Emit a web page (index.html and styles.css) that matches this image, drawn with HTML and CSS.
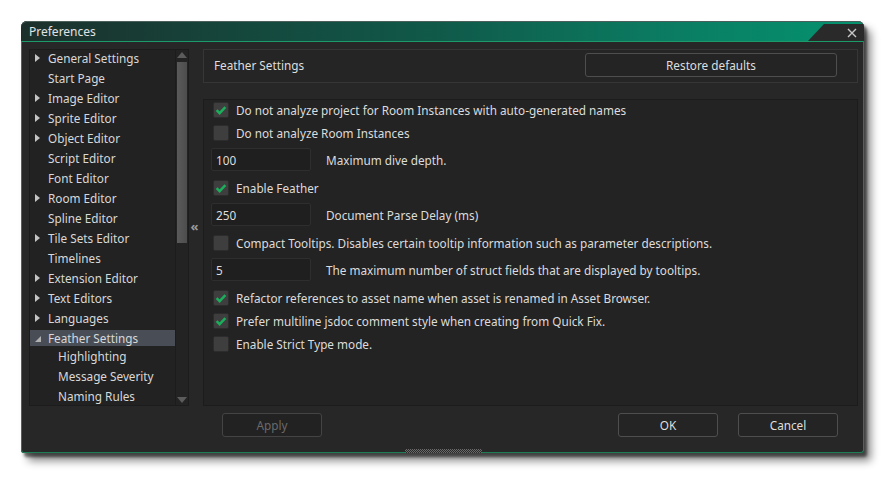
FILE: index.html
```html
<!DOCTYPE html>
<html>
<head>
<meta charset="utf-8">
<link rel="stylesheet" href="styles.css">
</head>
<body>
<div class="dialog">
  <div class="titlebar">
    <span class="title">Preferences</span>
    <div class="close-tab">
      <svg class="close-x" width="10" height="10" viewBox="0 0 10 10"><path d="M1 1 L9 9 M9 1 L1 9" stroke="#c8c8c8" stroke-width="1.4" fill="none"/></svg>
    </div>
  </div>
  <div class="body">
    <div class="main">
      <div class="tree-box">
        <ul class="tree">
          <li class="node"><span class="slot"><span class="arrow"></span></span>General Settings</li>
          <li class="node"><span class="slot"></span>Start Page</li>
          <li class="node"><span class="slot"><span class="arrow"></span></span>Image Editor</li>
          <li class="node"><span class="slot"><span class="arrow"></span></span>Sprite Editor</li>
          <li class="node"><span class="slot"><span class="arrow"></span></span>Object Editor</li>
          <li class="node"><span class="slot"></span>Script Editor</li>
          <li class="node"><span class="slot"></span>Font Editor</li>
          <li class="node"><span class="slot"><span class="arrow"></span></span>Room Editor</li>
          <li class="node"><span class="slot"></span>Spline Editor</li>
          <li class="node"><span class="slot"><span class="arrow"></span></span>Tile Sets Editor</li>
          <li class="node"><span class="slot"></span>Timelines</li>
          <li class="node"><span class="slot"><span class="arrow"></span></span>Extension Editor</li>
          <li class="node"><span class="slot"><span class="arrow"></span></span>Text Editors</li>
          <li class="node"><span class="slot"><span class="arrow"></span></span>Languages</li>
          <li class="node node-open"><span class="sel"><span class="slot"><span class="arrow-open"></span></span>Feather Settings</span></li>
          <li class="node child">Highlighting</li>
          <li class="node child">Message Severity</li>
          <li class="node child">Naming Rules</li>
        </ul>
        <div class="scrollbar">
          <span class="sb-up"></span>
          <span class="sb-thumb"></span>
          <span class="sb-space"></span>
          <span class="sb-down"></span>
        </div>
      </div>
      <div class="splitter">«</div>
      <div class="right">
        <div class="header-box">
          <span class="header-title">Feather Settings</span>
          <button class="btn restore">Restore defaults</button>
        </div>
        <div class="content-box">
          <div class="cb-row"><span class="cb checked"><svg width="16" height="16" viewBox="0 0 16 16"><path d="M3.6 8.2 L6.6 11.2 L12.4 5.2" stroke="#1cae5c" stroke-width="2.4" fill="none"/></svg></span><span class="lbl">Do not analyze project for Room Instances with auto-generated names</span></div>
          <div class="cb-row"><span class="cb"></span><span class="lbl">Do not analyze Room Instances</span></div>
          <div class="in-row"><span class="input">100</span><span class="in-lbl">Maximum dive depth.</span></div>
          <div class="cb-row"><span class="cb checked"><svg width="16" height="16" viewBox="0 0 16 16"><path d="M3.6 8.2 L6.6 11.2 L12.4 5.2" stroke="#1cae5c" stroke-width="2.4" fill="none"/></svg></span><span class="lbl">Enable Feather</span></div>
          <div class="in-row"><span class="input">250</span><span class="in-lbl">Document Parse Delay (ms)</span></div>
          <div class="cb-row"><span class="cb"></span><span class="lbl">Compact Tooltips. Disables certain tooltip information such as parameter descriptions.</span></div>
          <div class="in-row"><span class="input">5</span><span class="in-lbl">The maximum number of struct fields that are displayed by tooltips.</span></div>
          <div class="cb-row"><span class="cb checked"><svg width="16" height="16" viewBox="0 0 16 16"><path d="M3.6 8.2 L6.6 11.2 L12.4 5.2" stroke="#1cae5c" stroke-width="2.4" fill="none"/></svg></span><span class="lbl">Refactor references to asset name when asset is renamed in Asset Browser.</span></div>
          <div class="cb-row"><span class="cb checked"><svg width="16" height="16" viewBox="0 0 16 16"><path d="M3.6 8.2 L6.6 11.2 L12.4 5.2" stroke="#1cae5c" stroke-width="2.4" fill="none"/></svg></span><span class="lbl">Prefer multiline jsdoc comment style when creating from Quick Fix.</span></div>
          <div class="cb-row"><span class="cb"></span><span class="lbl">Enable Strict Type mode.</span></div>
        </div>
      </div>
    </div>
    <div class="buttons">
      <button class="btn btn-fixed disabled apply">Apply</button>
      <span class="spacer"></span>
      <button class="btn btn-fixed">OK</button>
      <button class="btn btn-fixed">Cancel</button>
    </div>
    <div class="grip"></div>
  </div>
</div>
</body>
</html>
```

FILE: styles.css
```css
html, body {
  margin: 0;
  padding: 0;
  background: #ffffff;
}
body {
  font-family: "Noto Sans", "Open Sans", sans-serif;
  font-size: 11.75px;
  color: #dcdcdc;
  padding: 21px 0 30px 21px;
}
.dialog {
  width: 843px;
  height: 432px;
  display: flex;
  flex-direction: column;
  border-radius: 6px 6px 3px 3px;
  box-shadow: 3px 4px 3px rgba(0, 0, 0, 0.55), 7px 8px 9px rgba(0, 0, 0, 0.45);
  background: #272727;
}
.titlebar {
  height: 20px;
  flex: none;
  display: flex;
  align-items: stretch;
  border-radius: 6px 6px 0 0;
  background: linear-gradient(90deg, #1c2f2b 0%, #15463c 25%, #105a4a 50%, #0b7a60 75%, #04936f 100%);
  box-shadow: inset 0 1px 0 #4d5f5a;
  overflow: hidden;
}
.title {
  flex: 1;
  padding-left: 8px;
  line-height: 21px;
  font-size: 12px;
  color: #e2e2e2;
}
.close-tab {
  width: 56px;
  margin-top: 3px;
  background: #2a2a2a;
  clip-path: polygon(16px 0, 100% 0, 100% 100%, 0 100%);
  display: flex;
  align-items: center;
  justify-content: flex-end;
  padding-right: 7px;
  box-sizing: border-box;
}
.close-x { display: block; margin-top: 1px; }
.body {
  flex: 1;
  display: flex;
  flex-direction: column;
  border: 1px solid #1f7d56;
  border-top-color: #1c9a69;
  border-radius: 0 0 3px 3px;
  padding: 7px 5px 0 7px;
  min-height: 0;
}
.main {
  height: 357px;
  flex: none;
  display: flex;
}
.tree-box {
  width: 160px;
  flex: none;
  box-sizing: border-box;
  border: 1px solid #1c1c1c;
  background: #222222;
  display: flex;
  overflow: hidden;
}
.tree {
  list-style: none;
  margin: -2px 0 0 0;
  padding: 0;
  width: 145px;
  flex: none;
}
.node {
  height: 20px;
  display: flex;
  align-items: center;
  white-space: nowrap;
  color: #d8d8d8;
}
.slot {
  width: 18px;
  flex: none;
  display: flex;
  align-items: center;
  padding-left: 5px;
  box-sizing: border-box;
}
.arrow {
  width: 0;
  height: 0;
  border-top: 4px solid transparent;
  border-bottom: 4px solid transparent;
  border-left: 5px solid #c4c4c4;
}
.arrow-open {
  width: 0;
  height: 0;
  border-left: 6px solid transparent;
  border-bottom: 6px solid #b0b0b0;
  margin-top: 1px;
}
.node-open {
  height: 18px;
  align-items: flex-end;
}
.sel {
  height: 16px;
  width: 100%;
  display: flex;
  align-items: center;
  background: #494e56;
}
.child {
  padding-left: 28px;
}
.scrollbar {
  width: 13px;
  flex: none;
  box-sizing: border-box;
  border-left: 1px solid #1c1c1c;
  background: #232323;
  display: flex;
  flex-direction: column;
  align-items: center;
}
.sb-up {
  margin-top: 2px;
  width: 0;
  height: 0;
  border-left: 5px solid transparent;
  border-right: 5px solid transparent;
  border-bottom: 6px solid #5c5c5c;
}
.sb-thumb {
  margin-top: 4px;
  width: 10px;
  height: 181px;
  background: linear-gradient(90deg, #5a5a5a, #4d4d4d);
}
.sb-space { flex: 1; }
.sb-down {
  margin-bottom: 2px;
  width: 0;
  height: 0;
  border-left: 5px solid transparent;
  border-right: 5px solid transparent;
  border-top: 6px solid #5c5c5c;
}
.splitter {
  width: 14px;
  flex: none;
  display: flex;
  align-items: center;
  justify-content: center;
  color: #9a9a9a;
  font-size: 13px;
  font-weight: bold;
  padding: 0 3px 3px 0;
  box-sizing: border-box;
}
.right {
  flex: 1;
  display: flex;
  flex-direction: column;
  gap: 16px;
  min-width: 0;
}
.header-box {
  height: 34px;
  flex: none;
  box-sizing: border-box;
  border: 1px solid #363636;
  background: #252525;
  display: flex;
  align-items: center;
  padding: 0 20px 2px 10px;
}
.header-title {
  flex: 1;
  color: #dedede;
}
.btn {
  font-family: "Noto Sans", "Open Sans", sans-serif;
  font-size: 11.75px;
  color: #dedede;
  background: #242424;
  border: 1px solid #4e4e4e;
  border-radius: 3px;
  height: 24px;
  padding: 0;
  margin: 0;
}
.restore {
  width: 252px;
}
.content-box {
  flex: 1;
  box-sizing: border-box;
  border: 1px solid #1c1c1c;
  background: #232323;
  padding: 2px 0 0 7px;
  display: flex;
  flex-direction: column;
}
.cb-row {
  height: 16px;
  margin-bottom: 7px;
  display: flex;
  align-items: center;
  white-space: nowrap;
  padding-left: 2px;
}
.cb {
  width: 16px;
  height: 16px;
  flex: none;
  box-sizing: border-box;
  background: #3e3e3e;
  border: 1px solid #2c2c2c;
  border-radius: 2px;
  display: flex;
}
.cb svg { display: block; margin: -1px; }
.lbl {
  margin-left: 7px;
}
.in-row {
  height: 23px;
  margin-bottom: 9px;
  display: flex;
  align-items: center;
  white-space: nowrap;
}
.input {
  width: 100px;
  height: 23px;
  flex: none;
  box-sizing: border-box;
  background: #1f1f1f;
  border: 1px solid #2e2e2e;
  border-radius: 2px;
  padding-left: 4px;
  display: flex;
  align-items: center;
  color: #dedede;
}
.in-lbl {
  margin-left: 15px;
}
.buttons {
  flex: none;
  display: flex;
  align-items: center;
  margin-top: 7px;
  padding-left: 193px;
  padding-right: 20px;
  gap: 20px;
}
.btn-fixed {
  width: 100px;
}
.spacer { flex: 1; }
.disabled {
  color: #6a6a6a;
  border-color: #444444;
  background: #222222;
}
.grip {
  margin-top: auto;
  margin-bottom: -1px;
  align-self: center;
  width: 77px;
  height: 4px;
  background-image: repeating-conic-gradient(#6a6a6a 0 25%, #2a2a2a 0 50%);
  background-size: 2px 2px;
}
```
